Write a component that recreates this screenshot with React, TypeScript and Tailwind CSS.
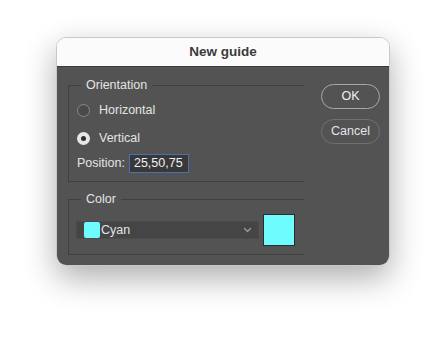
import React, { useState } from 'react';

const font = { fontFamily: '"Liberation Sans", Arial, sans-serif' };

const Radio: React.FC<{ label: string; checked: boolean; onClick: () => void }> = ({ label, checked, onClick }) => (
  <button type="button" onClick={onClick} className="flex items-center h-[20px] gap-[9px] text-left">
    {checked ? (
      <span className="w-[13px] h-[13px] rounded-full bg-[#e6e6e6] flex items-center justify-center">
        <span className="w-[5px] h-[5px] rounded-full bg-[#2e2e2e]" />
      </span>
    ) : (
      <span className="w-[13px] h-[13px] rounded-full bg-[#4a4a4a] border border-[#8a8a8a]" />
    )}
    <span className="text-[12.5px] text-[#e4e4e4]">{label}</span>
  </button>
);

export default function App() {
  const [orientation, setOrientation] = useState<'h' | 'v'>('v');

  return (
    <div className="w-[446px] h-[339px] bg-white overflow-hidden pt-[37px] pl-[56px]" style={font}>
      <div className="w-[334px] rounded-[10px] overflow-hidden border border-[#c9c9c9] shadow-[0_12px_32px_rgba(0,0,0,0.32)]">
        <div className="h-[29px] bg-[#fbfbfb] border-b border-[#3a3a3a] flex items-center justify-center">
          <span className="text-[13.5px] font-bold text-[#3c3c3c]">New guide</span>
        </div>
        <div className="bg-[#535353] flex pl-[11px] pt-[10px] pb-[10px]">
          <div className="w-[236px] flex flex-col">
            <fieldset className="border-t border-l border-b border-[#404040] pl-[8px] pb-[8px]">
              <legend className="ml-[4px] px-[5px] leading-[16px] text-[12.5px] text-[#e4e4e4]">Orientation</legend>
              <div className="flex flex-col">
                <div className="mt-[7px]">
                  <Radio label="Horizontal" checked={orientation === 'h'} onClick={() => setOrientation('h')} />
                </div>
                <div className="mt-[8px]">
                  <Radio label="Vertical" checked={orientation === 'v'} onClick={() => setOrientation('v')} />
                </div>
                <div className="mt-[5px] h-[20px] flex items-center gap-[4px]">
                  <span className="text-[12.5px] text-[#e4e4e4]">Position:</span>
                  <div className="w-[60px] h-[19px] border border-[#4a6fb5] bg-[#383838] flex items-center pl-[4px]">
                    <span className="text-[12.5px] text-[#f0f0f0]">25,50,75</span>
                  </div>
                </div>
              </div>
            </fieldset>
            <fieldset className="mt-[9px] border-t border-l border-b border-[#404040] pl-[7px] pb-[8px]">
              <legend className="ml-[5px] px-[5px] leading-[16px] text-[12.5px] text-[#e4e4e4]">Color</legend>
              <div className="mt-[7px] h-[32px] flex items-center gap-[4px]">
                <div className="w-[183px] h-[18px] bg-[#454545] border border-[#4b4b4b] flex items-center pl-[7px] pr-[6px]">
                  <span className="w-[16px] h-[16px] bg-[#6ffcfe] rounded-[2px]" />
                  <span className="ml-[1px] text-[12.5px] text-[#e4e4e4] flex-1">Cyan</span>
                  <svg width="9" height="6" viewBox="0 0 9 6" fill="none">
                    <path d="M1.5 1.5 4.5 4.5 7.5 1.5" stroke="#9a9a9a" strokeWidth="1.4" strokeLinecap="round" strokeLinejoin="round" />
                  </svg>
                </div>
                <div className="w-[32px] h-[32px] bg-[#6ffcfe] border border-[#2c2c2c]" />
              </div>
            </fieldset>
          </div>
          <div className="ml-[17px] w-[59px] flex flex-col gap-[10px] pt-[7px]">
            <button type="button" className="h-[25px] rounded-full border-[1.5px] border-[#a8a8a8] text-[12.5px] text-[#f0f0f0]">OK</button>
            <button type="button" className="h-[25px] rounded-full border border-[#707070] text-[12.5px] text-[#e4e4e4]">Cancel</button>
          </div>
        </div>
      </div>
    </div>
  );
}
